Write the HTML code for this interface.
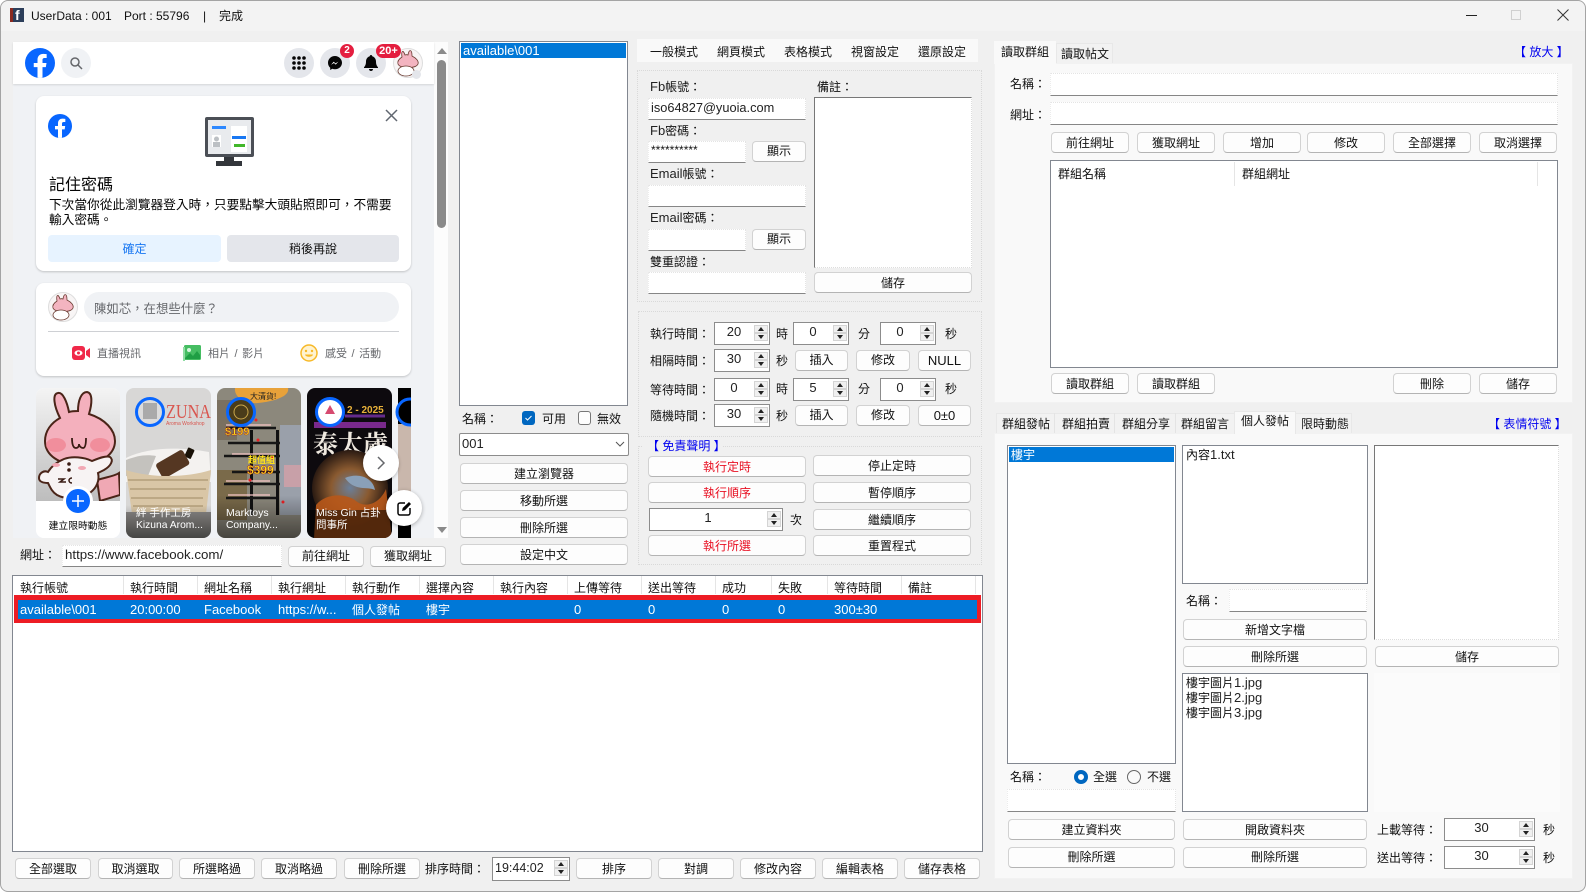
<!DOCTYPE html>
<html><head><meta charset="utf-8">
<style>
*{box-sizing:border-box}
html,body{margin:0;padding:0;width:1586px;height:893px;overflow:hidden;background:#fff}
body{position:relative;font-family:"Liberation Sans","Noto Sans CJK TC",sans-serif;font-size:12px;color:#111}
div,span.a{position:absolute}
.w{left:0;top:0;width:1586px;height:892px;background:#f0f0f0;border:1px solid #a4a4a4;border-radius:8px;overflow:hidden}
.l{position:absolute;white-space:nowrap;height:16px;line-height:16px}
.e{font-size:13px;color:#222}
.b{position:absolute;background:#fdfdfd;border:1px solid #d2d2d2;border-bottom-color:#b4b4b4;border-radius:4px;text-align:center;white-space:nowrap;line-height:21px;color:#111}
.q{line-height:19px}
.b.r{color:#e81123}
.i{position:absolute;background:#fff;border-top:1px dotted #e4e4e4;border-left:1px dotted #ececec;border-right:1px dotted #e4e4e4;border-bottom:1px solid #868686;white-space:nowrap}
.x{position:absolute;background:#fff;border:1px solid #828790}
.s{position:absolute;background:#fff;border:1px solid #8c8c8c;text-align:center;line-height:17px;font-size:13px;color:#222}
.s b{font-weight:normal;display:block;position:absolute;left:0;right:16px;top:0}
.s i{position:absolute;right:1px;width:14px;height:8px;background:#f0f0f0;border:1px solid #d4d4d4}
.s i:after{content:"";position:absolute;left:3px;width:0;height:0;border-left:3px solid transparent;border-right:3px solid transparent}
.s i.u{top:2px}.s i.d{top:10px}
.s i.u:after{top:1px;border-bottom:4px solid #222}
.s i.d:after{top:1px;border-top:4px solid #222}
.g{position:absolute;border:1px dotted #d9d9d9}
.sel{position:absolute;background:#0078d7;color:#fff;height:15px;line-height:15px;padding-left:2px;white-space:nowrap}
.v{position:absolute;top:576px;width:1px;height:18px;background:#e5e5e5}
.c{position:absolute;background:#fff;border-radius:8px;box-shadow:0 1px 2px rgba(0,0,0,.2)}
.o{position:absolute;border-radius:50%}
.t{position:absolute;text-align:center;line-height:20px;white-space:nowrap}
.fb{color:#050505}
</style></head><body>
<div class="w"></div>

<!-- title bar -->
<div style="left:1px;top:1px;width:1584px;height:30px;background:#f3f3f3;border-radius:8px 8px 0 0"></div>
<div style="left:10px;top:8px;width:14px;height:14px;background:#2c3e5a"></div>
<div style="left:10px;top:8px;width:3px;height:14px;background:#8a2a20"></div>
<div class="l" style="left:15px;top:7px;color:#fff;font-weight:bold;font-size:14px">f</div>
<div class="l" style="left:31px;top:8px">UserData : 001</div>
<div class="l" style="left:124px;top:8px">Port : 55796</div>
<div class="l" style="left:203px;top:8px">|</div>
<div class="l" style="left:219px;top:8px">完成</div>
<div style="left:1466px;top:15px;width:11px;height:1px;background:#222"></div>
<div style="left:1511px;top:10px;width:10px;height:10px;border:1px solid #d0d0d0"></div>
<svg style="position:absolute;left:1557px;top:9px" width="12" height="12" viewBox="0 0 12 12"><path d="M.5.5l11 11M11.500.5l-11 11" stroke="#333" fill="none"/></svg>

<!-- web area -->
<div style="left:13px;top:42px;width:435px;height:496px;background:#fcfcfc"></div>
<div style="left:13px;top:84px;width:421px;height:454px;background:#f0f2f5"></div>
<div style="left:13px;top:42px;width:421px;height:42px;background:#fff;box-shadow:0 1px 2px rgba(0,0,0,.12)"></div>
<svg style="position:absolute;left:25px;top:48px" width="30" height="30" viewBox="0 0 36 36"><circle cx="18" cy="18" r="18" fill="#0866ff"/><path fill="#fff" d="M25 23l.8-5H21v-3.500c0-1.400.5-2.500 2.700-2.500H26V7.400c-1.300-.2-2.700-.4-4-.4-4.100 0-7 2.500-7 7v4h-4.500v5H15v12.700c1 .2 2 .3 3 .3s2-.1 3-.3V23h4z"/></svg>
<div class="o" style="left:61px;top:48px;width:30px;height:30px;background:#f0f2f5"></div>
<svg style="position:absolute;left:69px;top:56px" width="14" height="14" viewBox="0 0 14 14"><circle cx="6" cy="6" r="4" fill="none" stroke="#65676b" stroke-width="1.500"/><path d="M9 9l4 4" stroke="#65676b" stroke-width="1.500"/></svg>
<div class="o" style="left:284px;top:48px;width:30px;height:30px;background:#e4e6eb"></div>
<svg style="position:absolute;left:292px;top:56px" width="14" height="14" viewBox="0 0 14 14" fill="#050505"><circle cx="2" cy="2" r="1.800"/><circle cx="7" cy="2" r="1.800"/><circle cx="12" cy="2" r="1.800"/><circle cx="2" cy="7" r="1.800"/><circle cx="7" cy="7" r="1.800"/><circle cx="12" cy="7" r="1.800"/><circle cx="2" cy="12" r="1.800"/><circle cx="7" cy="12" r="1.800"/><circle cx="12" cy="12" r="1.800"/></svg>
<div class="o" style="left:320px;top:48px;width:30px;height:30px;background:#e4e6eb"></div>
<svg style="position:absolute;left:328px;top:56px" width="14" height="15" viewBox="0 0 14 15"><path fill="#050505" d="M7 0C3 0 0 3 0 6.800c0 2 .8 3.800 2.200 5V14l2.100-1.200c.8.300 1.700.5 2.700.5 4 0 7-3 7-6.500S11 0 7 0z"/><path d="M3 8.800l2.700-3 1.800 1.600 2.900-1.800-2.700 3L6 7z" fill="#fff"/></svg>
<div class="o" style="left:356px;top:48px;width:30px;height:30px;background:#e4e6eb"></div>
<svg style="position:absolute;left:364px;top:55px" width="14" height="16" viewBox="0 0 14 16"><path fill="#050505" d="M7 0c.8 0 1.200.5 1.200 1.200C10.500 1.800 12 4 12 6.500c0 3 .8 4.500 2 5.700V13H0v-.8c1.200-1.200 2-2.700 2-5.700C2 4 3.500 1.800 5.800 1.200 5.800.5 6.200 0 7 0z"/><path fill="#050505" d="M5 14h4c0 1.200-.9 2-2 2s-2-.8-2-2z"/></svg>
<div class="o" style="left:340px;top:44px;width:14px;height:14px;background:#e41e3f;color:#fff;font-weight:bold;font-size:10px;line-height:14px;text-align:center">2</div>
<svg style="position:absolute;left:393px;top:48px" width="30" height="30" viewBox="0 0 30 30"><circle cx="15" cy="15" r="14.500" fill="#f8f5f5" stroke="#ddd"/><path d="M9 9C8 3 10 1 12 7c1-.4 2-.4 3 0 1-6 4-6 4 1 4 2 7 5 6 8-2 5-18 5-20 0-1-3 1-5 4-7z" fill="#f3b4c0" stroke="#6a3a30" stroke-width=".8"/><ellipse cx="13" cy="23" rx="8" ry="5" fill="#fff" stroke="#6a3a30" stroke-width=".8"/></svg>
<div style="left:376px;top:44px;width:25px;height:14px;border-radius:7px;background:#e41e3f;color:#fff;font-weight:bold;font-size:11px;line-height:14px;text-align:center">20+</div>
<div class="o" style="left:412px;top:70px;width:9px;height:9px;background:#e4e6eb"></div>

<!-- scrollbar -->
<div style="left:437px;top:48px;width:0;height:0;border-left:5px solid transparent;border-right:5px solid transparent;border-bottom:6px solid #8a8a8a"></div>
<div style="left:437px;top:60px;width:9px;height:168px;background:#8a8a8a;border-radius:5px"></div>
<div style="left:437px;top:527px;width:0;height:0;border-left:5px solid transparent;border-right:5px solid transparent;border-top:6px solid #8a8a8a"></div>

<!-- card 1 -->
<div class="c" style="left:36px;top:96px;width:375px;height:175px"></div>
<svg style="position:absolute;left:48px;top:114px" width="24" height="24" viewBox="0 0 36 36"><circle cx="18" cy="18" r="18" fill="#0866ff"/><path fill="#fff" d="M25 23l.8-5H21v-3.500c0-1.400.5-2.500 2.700-2.500H26V7.400c-1.300-.2-2.700-.4-4-.4-4.100 0-7 2.500-7 7v4h-4.500v5H15v12.700c1 .2 2 .3 3 .3s2-.1 3-.3V23h4z"/></svg>
<svg style="position:absolute;left:205px;top:117px" width="50" height="50" viewBox="0 0 50 50"><rect x="0" y="0" width="49" height="40" rx="2" fill="#4b4f56"/><rect x="3" y="3" width="43" height="34" fill="#e9ebee"/><rect x="7" y="9" width="14" height="3" fill="#2d88ff"/><rect x="7" y="18" width="9" height="12" fill="#fff"/><circle cx="11.500" cy="22" r="2.500" fill="#bcc0c4"/><rect x="8" y="25" width="7" height="5" fill="#bcc0c4"/><rect x="26" y="9" width="16" height="26" fill="#fff"/><rect x="27" y="19" width="14" height="3" fill="#1877f2"/><rect x="29" y="27" width="11" height="3" fill="#42b72a"/><rect x="19" y="40" width="10" height="4" fill="#33363b"/><rect x="11" y="44" width="26" height="5" fill="#33363b"/></svg>
<svg style="position:absolute;left:385px;top:109px" width="13" height="13" viewBox="0 0 13 13"><path d="M1 1l11 11M12 1L1 12" stroke="#606770" stroke-width="1.500"/></svg>
<div class="l fb" style="left:49px;top:177px;font-size:16px;height:18px;line-height:18px">記住密碼</div>
<div class="l fb" style="left:49px;top:197px;font-size:12.7px">下次當你從此瀏覽器登入時，只要點擊大頭貼照即可，不需要</div>
<div class="l fb" style="left:49px;top:212px;font-size:12.7px">輸入密碼。</div>
<div class="t" style="left:48px;top:235px;width:173px;height:27px;background:#e7f3ff;border-radius:4px;color:#1877f2;line-height:28px">確定</div>
<div class="t" style="left:227px;top:235px;width:172px;height:27px;background:#e4e6eb;border-radius:4px;line-height:28px">稍後再說</div>

<!-- card 2 -->
<div class="c" style="left:36px;top:283px;width:375px;height:93px"></div>
<svg style="position:absolute;left:48px;top:292px" width="30" height="30" viewBox="0 0 30 30"><circle cx="15" cy="15" r="14.500" fill="#f8f5f5" stroke="#ddd"/><path d="M9 9C8 3 10 1 12 7c1-.4 2-.4 3 0 1-6 4-6 4 1 4 2 7 5 6 8-2 5-18 5-20 0-1-3 1-5 4-7z" fill="#f3b4c0" stroke="#6a3a30" stroke-width=".8"/><ellipse cx="13" cy="23" rx="8" ry="5" fill="#fff" stroke="#6a3a30" stroke-width=".8"/></svg>
<div style="left:84px;top:292px;width:315px;height:30px;background:#f0f2f5;border-radius:15px"></div>
<div class="l" style="left:94px;top:301px;font-size:12.400px;color:#65676b">陳如芯，在想些什麼？</div>
<div style="left:48px;top:331px;width:351px;height:1px;background:#ced0d4"></div>
<svg style="position:absolute;left:72px;top:346px" width="18" height="14" viewBox="0 0 18 14"><rect width="13" height="14" rx="3" fill="#f02849"/><ellipse cx="6.500" cy="7" rx="4" ry="2.700" fill="#fff"/><circle cx="6.500" cy="7" r="1.500" fill="#f02849"/><path d="M14 5l4-3v10l-4-3z" fill="#f02849"/></svg>
<div class="l" style="left:97px;top:346px;font-size:11px;color:#65676b">直播視訊</div>
<svg style="position:absolute;left:183px;top:345px" width="18" height="16" viewBox="0 0 18 16"><rect x="1" width="17" height="15" rx="1.500" fill="#45bd62"/><circle cx="6" cy="5" r="2" fill="#d6f5dd"/><path d="M2 13l5-5 3 3 4-5 3 4v4H2z" fill="#1f9e44"/><rect y="2" width="2" height="14" fill="#8fdca3"/></svg>
<div class="l" style="left:208px;top:346px;font-size:11px;color:#65676b;word-spacing:1.500px">相片 / 影片</div>
<svg style="position:absolute;left:300px;top:344px" width="18" height="18" viewBox="0 0 18 18"><circle cx="9" cy="9" r="8" fill="#fff3d0" stroke="#f7b928" stroke-width="1.500"/><circle cx="6" cy="7" r="1.200" fill="#f7b928"/><circle cx="12" cy="7" r="1.200" fill="#f7b928"/><path d="M5 10.500h8c-.5 3-7.500 3-8 0z" fill="#f7b928"/></svg>
<div class="l" style="left:325px;top:346px;font-size:11px;color:#65676b;word-spacing:1.500px">感受 / 活動</div>

<!-- stories -->
<svg style="position:absolute;left:36px;top:388px" width="375" height="150" viewBox="36 388 375 150" font-family="Liberation Sans,Noto Sans CJK TC,sans-serif">
<defs>
<clipPath id="s1"><rect x="36" y="388" width="84" height="150" rx="8"/></clipPath>
<clipPath id="s2"><rect x="126" y="388" width="85" height="150" rx="8"/></clipPath>
<clipPath id="s3"><rect x="217" y="388" width="84" height="150" rx="8"/></clipPath>
<clipPath id="s4"><rect x="307" y="388" width="85" height="150" rx="8"/></clipPath>
<linearGradient id="gg" x1="0" y1="0" x2="0" y2="1"><stop offset="0" stop-color="#f4f4f4"/><stop offset="1" stop-color="#bdbdbd"/></linearGradient>
<linearGradient id="dk" x1="0" y1="0" x2="0" y2="1"><stop offset="0" stop-color="#000" stop-opacity="0"/><stop offset="1" stop-color="#000" stop-opacity=".5"/></linearGradient>
<radialGradient id="sw"><stop offset="0" stop-color="#6a7f9a"/><stop offset=".5" stop-color="#8a5a30"/><stop offset="1" stop-color="#2a1a12"/></radialGradient>
</defs>
<g clip-path="url(#s1)">
<rect x="36" y="388" width="84" height="150" fill="#fff"/>
<rect x="36" y="388" width="84" height="113" fill="url(#gg)"/>
<g stroke="#4a2418" stroke-width="2">
<path d="M97 480c10-3 18-4 22-7l1 22-20 6z" fill="#f0a8b4"/>
<path d="M60 418c-6-12-8-24-2-25 5-1 9 9 11 19 3-1 7-1 9-1 0-10 3-19 9-19 6 1 5 12 2 22 16 5 26 16 26 27 0 13-14 24-35 24s-35-10-35-24c0-10 6-18 15-23z" fill="#f4b0bd"/>
<path d="M64 459c8-3 20-2 28 2 5-2 14-6 18-4 4 3 1 9-6 13l-6 3c2 8-2 15-7 19-9 7-25 8-34 3-5-3-7-8-9-12-4 0-9-1-9-5 0-5 5-8 9-6 3-5 9-10 16-13z" fill="#f7f3f3"/>
</g>
<ellipse cx="56" cy="445" rx="10" ry="7" fill="#f0808f" opacity=".7"/><ellipse cx="100" cy="445" rx="10" ry="7" fill="#f0808f" opacity=".7"/>
<path d="M72 438c0 8 2 10 4 10s3-2 3-4c0 2 2 4 4 4s3-3 3-10" fill="none" stroke="#3a1c14" stroke-width="1.800"/>
<circle cx="69" cy="464" r="1.800" fill="#3a1c14"/><circle cx="69" cy="470" r="1.800" fill="#3a1c14"/><ellipse cx="56" cy="465" rx="4" ry="2" fill="#f2a8b4"/><ellipse cx="82" cy="468" rx="4" ry="2" fill="#f2a8b4"/>
<path d="M58 479h6l-4 3h6M72 478c-4 0-4 5 0 5" fill="none" stroke="#3a1c14" stroke-width="1.500"/>
<rect x="36" y="501" width="84" height="37" fill="#fff"/>
<circle cx="78" cy="501" r="15" fill="#fff"/><circle cx="78" cy="501" r="12" fill="#0866ff"/><path d="M78 495v12M72 501h12" stroke="#fff" stroke-width="1.500"/>
<text x="78" y="529" font-size="9.800" text-anchor="middle" fill="#050505">建立限時動態</text>
</g>
<g clip-path="url(#s2)">
<rect x="126" y="388" width="85" height="150" fill="#d8d7d6"/>
<text x="166" y="418" font-family="Liberation Serif,serif" font-size="20" fill="#d9564f" textLength="45" lengthAdjust="spacingAndGlyphs">ZUNA</text>
<text x="166" y="425" font-size="5" fill="#d9564f">Aroma Workshop</text>
<path d="M126 458c20-10 50-12 83-6l2 30h-85z" fill="#f4f2f0"/>
<path d="M126 460c10-4 20-6 30-4l-8 20h-22z" fill="#c4c2be"/>
<rect x="186" y="448" width="7" height="10" rx="1" transform="rotate(25 189 453)" fill="#1a1208"/>
<rect x="157" y="456" width="31" height="17" rx="3" transform="rotate(-30 172 464)" fill="#553722"/>
<path d="M126 470c25 8 60 8 85 0l-5 44h-74z" fill="#d9c6a6"/>
<path d="M128 480h80M130 489h76M131 498h72M133 506h70" stroke="#ab9672" stroke-width="1.300"/>
<rect x="126" y="512" width="85" height="26" fill="#8a8886"/>
<rect x="126" y="505" width="85" height="33" fill="url(#dk)"/>
<text x="136" y="516" font-size="10.500" fill="#fff">絆 手作工房</text>
<text x="136" y="528" font-size="10.300" fill="#fff">Kizuna Arom...</text>
</g>
<circle cx="150" cy="412" r="13.500" fill="#dcdcdc" stroke="#0866ff" stroke-width="3"/>
<rect x="143" y="403" width="14" height="16" fill="#aaa"/>
<g clip-path="url(#s3)">
<rect x="217" y="388" width="84" height="150" fill="#8c887c"/>
<path d="M235 388h53c2 7-10 13-30 15-14 1-24-6-23-15z" fill="#e8a23a"/>
<rect x="217" y="470" width="30" height="50" fill="#7a6a4a"/>
<rect x="280" y="425" width="21" height="90" fill="#9aa0aa"/>
<rect x="217" y="400" width="20" height="40" fill="#7a7060"/>
<rect x="284" y="465" width="17" height="22" fill="#c8a0a8"/>
<rect x="250" y="430" width="3" height="85" fill="#111"/><rect x="276" y="430" width="3" height="85" fill="#111"/>
<path d="M226 428h50M228 443h52M224 456h56M232 472h48M224 484h56M226 498h50" stroke="#161616" stroke-width="2.500"/>
<path d="M226 425h45M232 454h44M226 481h44M228 495h42" stroke="#f7c6c6" stroke-width="1.200"/>
<g fill="#ed2024"><circle cx="256" cy="420" r="1.500"/><circle cx="258" cy="440" r="1.500"/><circle cx="265" cy="470" r="1.500"/><circle cx="272" cy="458" r="1.500"/><circle cx="250" cy="480" r="1.500"/><circle cx="283" cy="502" r="1.500"/></g>
<text x="225" y="435" font-size="11" font-weight="bold" fill="#ffe11a" stroke="#9a1b1b" stroke-width=".4">$199</text>
<text x="248" y="463" font-size="9" font-weight="bold" fill="#ffe11a">超值組</text>
<text x="247" y="474" font-size="12" font-weight="bold" fill="#ffe11a" stroke="#9a1b1b" stroke-width=".4">$399</text>
<text x="250" y="399" font-size="8" fill="#222">大清貨!</text>
<rect x="217" y="495" width="84" height="43" fill="url(#dk)"/>
<text x="226" y="516" font-size="10.500" fill="#fff">Marktoys</text>
<text x="226" y="528" font-size="10.300" fill="#fff">Company...</text>
</g>
<circle cx="241" cy="412" r="13.500" fill="#4a3c1a" stroke="#0866ff" stroke-width="3"/>
<circle cx="241" cy="412" r="7" fill="none" stroke="#c9a64a"/>
<g clip-path="url(#s4)">
<rect x="307" y="388" width="85" height="150" fill="#0d0a0e"/>
<text x="347" y="413" font-size="10" font-weight="bold" fill="#e8b23a">2 - 2025</text>
<path d="M314 425h72" stroke="#b43ad0" stroke-width="6" opacity=".65"/>
<path d="M345 416h40" stroke="#8a3ac0" stroke-width="3" opacity=".7"/>
<text x="313" y="453" font-family="Liberation Serif,Noto Serif CJK SC,serif" font-size="25" font-weight="bold" fill="#efe9e0">泰太歲</text>
<circle cx="350" cy="488" r="38" fill="url(#sw)"/>
<path d="M316 505c10-12 30-12 40-4 10 8 24 2 30-12l6 49h-78z" fill="#b8581a" opacity=".9"/>
<path d="M345 478c14-6 28 0 30 12-8-4-20 2-30-12z" fill="#8aa0b8"/>
<rect x="307" y="510" width="85" height="28" fill="#000" opacity=".5"/>
<text x="316" y="516" font-size="10.500" fill="#fff">Miss Gin 占卦</text>
<text x="316" y="528" font-size="10.500" fill="#fff">問事所</text>
</g>
<circle cx="330" cy="412" r="13.500" fill="#fff" stroke="#0866ff" stroke-width="3"/>
<path d="M330 405l5 9h-10z" fill="#d64a70"/>
<rect x="398" y="388" width="13" height="150" fill="#000"/>
<rect x="398" y="424" width="13" height="84" fill="#c9b7ac"/>
<circle cx="410" cy="412" r="13" fill="none" stroke="#0866ff" stroke-width="3"/>
</svg>
<div class="o" style="left:363px;top:445px;width:36px;height:36px;background:#fff;box-shadow:0 1px 3px rgba(0,0,0,.25)"></div>
<svg style="position:absolute;left:376px;top:455px" width="10" height="16" viewBox="0 0 10 16"><path d="M2 2l6 6-6 6" fill="none" stroke="#65676b" stroke-width="1.500"/></svg>
<div class="o" style="left:386px;top:490px;width:36px;height:36px;background:#fff;box-shadow:0 1px 4px rgba(0,0,0,.3)"></div>
<svg style="position:absolute;left:397px;top:501px" width="15" height="15" viewBox="0 0 15 15"><path d="M8 2H3a2 2 0 0 0-2 2v8a2 2 0 0 0 2 2h8a2 2 0 0 0 2-2V7" fill="none" stroke="#050505" stroke-width="1.500"/><path d="M5 10l.7-3L12 1l2 2-6 6.300z" fill="#050505"/></svg>

<!-- url row -->
<div class="l" style="left:20px;top:547px">網址：</div>
<div class="i e" style="left:62px;top:545px;width:220px;height:22px;line-height:18px;padding-left:2px;font-size:13.300px">https://www.facebook.com/</div>
<div class="b q" style="left:288px;top:546px;width:76px;height:21px">前往網址</div>
<div class="b q" style="left:370px;top:546px;width:76px;height:21px">獲取網址</div>

<!-- list 1 -->
<div class="x" style="left:459px;top:41px;width:169px;height:365px"></div>
<div class="sel" style="left:461px;top:43px;width:165px;font-size:13px">available\001</div>
<div class="l" style="left:462px;top:411px">名稱：</div>
<div style="left:522px;top:411px;width:13px;height:14px;background:#0067c0;border-radius:3px"></div>
<svg style="position:absolute;left:522px;top:411px" width="13" height="14" viewBox="0 0 13 14"><path d="M3.500 7l2 2 4-4" fill="none" stroke="#fff"/></svg>
<div class="l" style="left:542px;top:411px">可用</div>
<div style="left:578px;top:411px;width:13px;height:14px;background:#fdfdfd;border:1px solid #777;border-radius:3px"></div>
<div class="l" style="left:597px;top:411px">無效</div>
<div style="left:459px;top:433px;width:170px;height:23px;background:#fff;border:1px solid #8c8c8c;border-radius:2px;padding-left:2px;line-height:19px" class="e">001</div>
<svg style="position:absolute;left:615px;top:441px" width="10" height="7" viewBox="0 0 10 7"><path d="M1 1l4 4 4-4" fill="none" stroke="#555"/></svg>
<div class="b" style="left:460px;top:463px;width:168px;height:21px">建立瀏覽器</div>
<div class="b" style="left:460px;top:490px;width:168px;height:21px">移動所選</div>
<div class="b" style="left:460px;top:517px;width:168px;height:21px">刪除所選</div>
<div class="b" style="left:460px;top:544px;width:168px;height:21px">設定中文</div>

<!-- menu -->
<div style="left:637px;top:39px;width:341px;height:23px;background:#f9f9f9"></div>
<div class="l" style="left:650px;top:44px">一般模式</div>
<div class="l" style="left:717px;top:44px">網頁模式</div>
<div class="l" style="left:784px;top:44px">表格模式</div>
<div class="l" style="left:851px;top:44px">視窗設定</div>
<div class="l" style="left:918px;top:44px">還原設定</div>

<!-- account box -->
<div class="g" style="left:637px;top:70px;width:345px;height:232px"></div>
<div class="l" style="left:650px;top:79px"><span class="e">Fb</span>帳號：</div>
<div class="i e" style="left:648px;top:98px;width:158px;height:22px;line-height:18px;padding-left:2px;font-size:12.800px">iso64827@yuoia.com</div>
<div class="l" style="left:650px;top:123px"><span class="e">Fb</span>密碼：</div>
<div class="i" style="left:648px;top:141px;width:98px;height:22px;line-height:16px;padding-left:2px;font-size:12px">**********</div>
<div class="b q" style="left:752px;top:141px;width:54px;height:21px">顯示</div>
<div class="l" style="left:650px;top:166px"><span class="e">Email</span>帳號：</div>
<div class="i" style="left:648px;top:185px;width:158px;height:22px"></div>
<div class="l" style="left:650px;top:210px"><span class="e">Email</span>密碼：</div>
<div class="i" style="left:648px;top:229px;width:98px;height:22px"></div>
<div class="b q" style="left:752px;top:229px;width:54px;height:21px">顯示</div>
<div class="l" style="left:650px;top:254px">雙重認證：</div>
<div class="i" style="left:648px;top:272px;width:158px;height:22px"></div>
<div class="l" style="left:817px;top:79px">備註：</div>
<div style="left:814px;top:97px;width:158px;height:171px;background:#fff;border-top:1px solid #777;border-left:1px solid #777;border-right:1px dotted #ddd;border-bottom:1px dotted #ddd"></div>
<div class="b" style="left:814px;top:272px;width:158px;height:21px">儲存</div>

<!-- timing box -->
<div class="g" style="left:638px;top:311px;width:344px;height:126px"></div>
<div class="l" style="left:650px;top:326px">執行時間：</div>
<div class="s" style="left:714px;top:322px;width:56px;height:23px"><b>20</b><i class="u"></i><i class="d"></i></div>
<div class="l" style="left:776px;top:326px">時</div>
<div class="s" style="left:793px;top:322px;width:56px;height:23px"><b>0</b><i class="u"></i><i class="d"></i></div>
<div class="l" style="left:858px;top:326px">分</div>
<div class="s" style="left:880px;top:322px;width:56px;height:23px"><b>0</b><i class="u"></i><i class="d"></i></div>
<div class="l" style="left:945px;top:326px">秒</div>

<div class="l" style="left:650px;top:353px">相隔時間：</div>
<div class="s" style="left:714px;top:349px;width:56px;height:23px"><b>30</b><i class="u"></i><i class="d"></i></div>
<div class="l" style="left:776px;top:353px">秒</div>
<div class="b q" style="left:795px;top:350px;width:53px;height:21px">插入</div>
<div class="b q" style="left:856px;top:350px;width:54px;height:21px">修改</div>
<div class="b q e" style="left:918px;top:350px;width:53px;height:21px">NULL</div>

<div class="l" style="left:650px;top:382px">等待時間：</div>
<div class="s" style="left:714px;top:378px;width:56px;height:23px"><b>0</b><i class="u"></i><i class="d"></i></div>
<div class="l" style="left:776px;top:381px">時</div>
<div class="s" style="left:793px;top:378px;width:56px;height:23px"><b>5</b><i class="u"></i><i class="d"></i></div>
<div class="l" style="left:858px;top:381px">分</div>
<div class="s" style="left:880px;top:378px;width:56px;height:23px"><b>0</b><i class="u"></i><i class="d"></i></div>
<div class="l" style="left:945px;top:381px">秒</div>

<div class="l" style="left:650px;top:408px">隨機時間：</div>
<div class="s" style="left:714px;top:404px;width:56px;height:23px"><b>30</b><i class="u"></i><i class="d"></i></div>
<div class="l" style="left:776px;top:408px">秒</div>
<div class="b q" style="left:795px;top:405px;width:53px;height:21px">插入</div>
<div class="b q" style="left:856px;top:405px;width:54px;height:21px">修改</div>
<div class="b q e" style="left:918px;top:405px;width:53px;height:21px">0±0</div>

<!-- run box -->
<div class="g" style="left:638px;top:446px;width:344px;height:119px"></div>
<div class="l" style="left:643px;top:438px;width:80px;background:#f0f0f0;color:#0000f0;padding-left:4px">【 免責聲明 】</div>
<div class="b r" style="left:648px;top:456px;width:158px;height:21px">執行定時</div>
<div class="b" style="left:813px;top:455px;width:158px;height:21px">停止定時</div>
<div class="b r" style="left:648px;top:482px;width:158px;height:21px">執行順序</div>
<div class="b" style="left:813px;top:482px;width:158px;height:21px">暫停順序</div>
<div class="s" style="left:649px;top:508px;width:134px;height:23px"><b>1</b><i class="u"></i><i class="d"></i></div>
<div class="l" style="left:790px;top:512px">次</div>
<div class="b" style="left:813px;top:509px;width:158px;height:21px">繼續順序</div>
<div class="b r" style="left:648px;top:535px;width:158px;height:21px">執行所選</div>
<div class="b" style="left:813px;top:535px;width:158px;height:21px">重置程式</div>

<!-- main table -->
<div class="x" style="left:12px;top:575px;width:971px;height:277px"></div>
<div class="v" style="left:123px"></div><div class="v" style="left:197px"></div><div class="v" style="left:271px"></div><div class="v" style="left:345px"></div><div class="v" style="left:419px"></div><div class="v" style="left:493px"></div><div class="v" style="left:567px"></div><div class="v" style="left:641px"></div><div class="v" style="left:715px"></div><div class="v" style="left:771px"></div><div class="v" style="left:827px"></div><div class="v" style="left:901px"></div><div class="v" style="left:975px"></div>
<div class="l" style="left:20px;top:580px">執行帳號</div>
<div class="l" style="left:130px;top:580px">執行時間</div>
<div class="l" style="left:204px;top:580px">網址名稱</div>
<div class="l" style="left:278px;top:580px">執行網址</div>
<div class="l" style="left:352px;top:580px">執行動作</div>
<div class="l" style="left:426px;top:580px">選擇內容</div>
<div class="l" style="left:500px;top:580px">執行內容</div>
<div class="l" style="left:574px;top:580px">上傳等待</div>
<div class="l" style="left:648px;top:580px">送出等待</div>
<div class="l" style="left:722px;top:580px">成功</div>
<div class="l" style="left:778px;top:580px">失敗</div>
<div class="l" style="left:834px;top:580px">等待時間</div>
<div class="l" style="left:908px;top:580px">備註</div>
<div style="left:14px;top:595px;width:967px;height:28px;background:#0078d7;border:solid #ed1c24;border-width:5px 4px 4px 4px"></div>
<div class="l" style="left:20px;top:602px;color:#fff;font-size:13px">available\001</div>
<div class="l" style="left:130px;top:602px;color:#fff;font-size:13px">20:00:00</div>
<div class="l" style="left:204px;top:602px;color:#fff;font-size:13px">Facebook</div>
<div class="l" style="left:278px;top:602px;color:#fff;font-size:13px">https://w...</div>
<div class="l" style="left:352px;top:602px;color:#fff">個人發帖</div>
<div class="l" style="left:426px;top:602px;color:#fff">樓宇</div>
<div class="l" style="left:574px;top:602px;color:#fff;font-size:13px">0</div>
<div class="l" style="left:648px;top:602px;color:#fff;font-size:13px">0</div>
<div class="l" style="left:722px;top:602px;color:#fff;font-size:13px">0</div>
<div class="l" style="left:778px;top:602px;color:#fff;font-size:13px">0</div>
<div class="l" style="left:834px;top:602px;color:#fff;font-size:13px">300±30</div>

<!-- bottom row -->
<div class="b" style="left:15px;top:858px;width:76px;height:21px">全部選取</div>
<div class="b" style="left:98px;top:858px;width:75px;height:21px">取消選取</div>
<div class="b" style="left:179px;top:858px;width:76px;height:21px">所選略過</div>
<div class="b" style="left:261px;top:858px;width:76px;height:21px">取消略過</div>
<div class="b" style="left:344px;top:858px;width:76px;height:21px">刪除所選</div>
<div class="l" style="left:425px;top:861px">排序時間：</div>
<div class="s" style="left:492px;top:857px;width:78px;height:24px;text-align:left;padding-left:2px;font-size:12.500px;line-height:20px"><span>19:44:02</span><i class="u"></i><i class="d"></i></div>
<div class="b" style="left:576px;top:858px;width:76px;height:21px">排序</div>
<div class="b" style="left:658px;top:858px;width:76px;height:21px">對調</div>
<div class="b" style="left:740px;top:858px;width:76px;height:21px">修改內容</div>
<div class="b" style="left:822px;top:858px;width:76px;height:21px">編輯表格</div>
<div class="b" style="left:904px;top:858px;width:76px;height:21px">儲存表格</div>

<!-- right top tabs -->
<div style="left:994px;top:63px;width:579px;height:340px;background:#f9f9f9;border:1px solid #f2f2f2"></div>
<div style="left:994px;top:41px;width:62px;height:23px;background:#f9f9f9"></div>
<div class="l" style="left:1001px;top:44px">讀取群組</div>
<div style="left:1056px;top:43px;width:57px;height:20px;background:#f2f2f2;border:1px solid #e8e8e8;border-bottom:none"></div>
<div class="l" style="left:1061px;top:46px">讀取帖文</div>
<div class="l" style="left:1514px;top:44px;color:#0000f0">【 放大 】</div>
<div class="l" style="left:1010px;top:76px">名稱：</div>
<div class="i" style="left:1050px;top:73px;width:508px;height:23px"></div>
<div class="l" style="left:1010px;top:107px">網址：</div>
<div class="i" style="left:1050px;top:102px;width:508px;height:23px"></div>
<div class="b" style="left:1051px;top:132px;width:78px;height:21px">前往網址</div>
<div class="b" style="left:1137px;top:132px;width:78px;height:21px">獲取網址</div>
<div class="b" style="left:1223px;top:132px;width:78px;height:21px">增加</div>
<div class="b" style="left:1307px;top:132px;width:78px;height:21px">修改</div>
<div class="b" style="left:1393px;top:132px;width:78px;height:21px">全部選擇</div>
<div class="b" style="left:1479px;top:132px;width:78px;height:21px">取消選擇</div>
<div class="x" style="left:1050px;top:160px;width:508px;height:208px"></div>
<div style="left:1234px;top:162px;width:1px;height:24px;background:#e5e5e5"></div>
<div style="left:1537px;top:162px;width:1px;height:24px;background:#e5e5e5"></div>
<div class="l" style="left:1058px;top:166px">群組名稱</div>
<div class="l" style="left:1242px;top:166px">群組網址</div>
<div class="b" style="left:1051px;top:373px;width:78px;height:21px">讀取群組</div>
<div class="b" style="left:1137px;top:373px;width:78px;height:21px">讀取群組</div>
<div class="b" style="left:1393px;top:373px;width:78px;height:21px">刪除</div>
<div class="b" style="left:1479px;top:373px;width:78px;height:21px">儲存</div>

<!-- right bottom tabs -->
<div style="left:994px;top:433px;width:579px;height:446px;background:#f9f9f9;border:1px solid #f2f2f2"></div>
<div style="left:996px;top:413px;width:356px;height:20px;background:#f2f2f2;border:1px solid #e8e8e8;border-bottom:none"></div>
<div style="left:1054px;top:413px;width:1px;height:20px;background:#e4e4e4"></div>
<div style="left:1114px;top:413px;width:1px;height:20px;background:#e4e4e4"></div>
<div style="left:1175px;top:413px;width:1px;height:20px;background:#e4e4e4"></div>
<div style="left:1234px;top:411px;width:62px;height:23px;background:#f9f9f9;border:1px solid #e8e8e8;border-bottom:none"></div>
<div class="l" style="left:1002px;top:416px">群組發帖</div>
<div class="l" style="left:1062px;top:416px">群組拍賣</div>
<div class="l" style="left:1122px;top:416px">群組分享</div>
<div class="l" style="left:1181px;top:416px">群組留言</div>
<div class="l" style="left:1241px;top:413px">個人發帖</div>
<div class="l" style="left:1301px;top:416px">限時動態</div>
<div class="l" style="left:1488px;top:416px;color:#0000f0">【 表情符號 】</div>

<div class="x" style="left:1007px;top:445px;width:169px;height:319px"></div>
<div class="sel" style="left:1009px;top:447px;width:165px;line-height:16px">樓宇</div>
<div class="l" style="left:1010px;top:769px">名稱：</div>
<div class="o" style="left:1074px;top:770px;width:14px;height:14px;border:4px solid #0067c0;background:#fff"></div>
<div class="l" style="left:1093px;top:769px">全選</div>
<div class="o" style="left:1127px;top:770px;width:14px;height:14px;border:1px solid #666;background:#fafafa"></div>
<div class="l" style="left:1147px;top:769px">不選</div>
<div class="i" style="left:1007px;top:789px;width:169px;height:23px"></div>
<div class="b" style="left:1008px;top:819px;width:167px;height:21px">建立資料夾</div>
<div class="b q" style="left:1008px;top:847px;width:167px;height:21px">刪除所選</div>

<div class="x" style="left:1182px;top:445px;width:186px;height:139px"></div>
<div class="l" style="left:1186px;top:447px">內容<span class="e">1.txt</span></div>
<div class="l" style="left:1186px;top:593px">名稱：</div>
<div class="i" style="left:1229px;top:589px;width:138px;height:23px"></div>
<div class="b" style="left:1183px;top:619px;width:184px;height:21px">新增文字檔</div>
<div class="b" style="left:1183px;top:646px;width:184px;height:21px">刪除所選</div>
<div class="x" style="left:1182px;top:673px;width:186px;height:139px"></div>
<div class="l" style="left:1186px;top:675px">樓宇圖片<span class="e">1.jpg</span></div>
<div class="l" style="left:1186px;top:690px">樓宇圖片<span class="e">2.jpg</span></div>
<div class="l" style="left:1186px;top:705px">樓宇圖片<span class="e">3.jpg</span></div>

<div style="left:1374px;top:445px;width:185px;height:195px;background:#fff;border-top:1px solid #777;border-left:1px solid #777;border-right:1px dotted #ddd;border-bottom:1px dotted #ddd"></div>
<div class="b" style="left:1375px;top:646px;width:184px;height:21px">儲存</div>
<div style="left:1374px;top:673px;width:186px;height:139px;background:#fbfbfb"></div>
<div class="b" style="left:1183px;top:819px;width:184px;height:21px">開啟資料夾</div>
<div class="b q" style="left:1183px;top:847px;width:184px;height:21px">刪除所選</div>
<div class="l" style="left:1377px;top:822px">上載等待：</div>
<div class="s" style="left:1444px;top:818px;width:91px;height:23px"><b>30</b><i class="u"></i><i class="d"></i></div>
<div class="l" style="left:1543px;top:822px">秒</div>
<div class="l" style="left:1377px;top:850px">送出等待：</div>
<div class="s" style="left:1444px;top:846px;width:91px;height:23px"><b>30</b><i class="u"></i><i class="d"></i></div>
<div class="l" style="left:1543px;top:850px">秒</div>
</body></html>
